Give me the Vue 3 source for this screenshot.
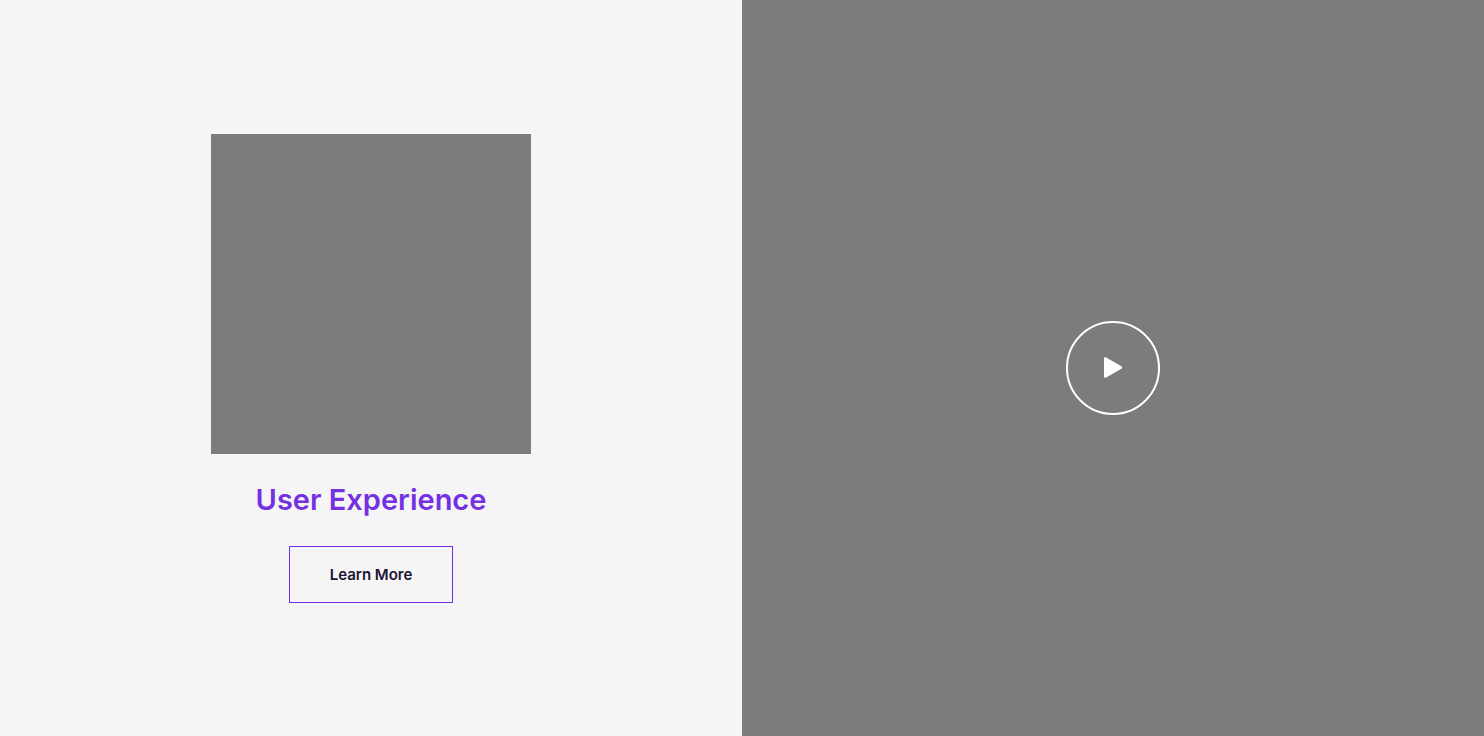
<script setup>
const title = 'User Experience'
</script>

<template>
  <main class="split">
    <section class="intro">
      <div class="media" role="img" :aria-label="title"></div>
      <h2 class="title">{{ title }}</h2>
      <a class="more" href="#">Learn More</a>
    </section>
    <section class="video">
      <button class="play" type="button" aria-label="Play video">
        <svg viewBox="0 0 20 22" width="20" height="22" aria-hidden="true">
          <path d="M1 1.600C1 .4 2 -.1 3.200.6L18.400 9.200C19.500 9.900 19.500 11.100 18.400 11.800L3.200 20.500C2 21.100 1 20.600 1 19.400Z" fill="#fff" />
        </svg>
      </button>
    </section>
  </main>
</template>

<style>
body {
  margin: 0;
}
</style>

<style scoped>
.split {
  display: grid;
  grid-template-columns: 1fr 1fr;
  min-height: 100vh;
  font-family: Inter, "Liberation Sans", sans-serif;
}
.intro {
  display: flex;
  flex-direction: column;
  align-items: center;
  justify-content: center;
  background: #f5f5f5;
}
.media {
  width: 320px;
  aspect-ratio: 1;
  background: #7b7c7e;
}
.title {
  margin: 28px 0;
  font-size: 29px;
  line-height: 36px;
  font-weight: 600;
  color: #7430e2;
}
.more {
  box-sizing: border-box;
  padding: 18px 40px;
  border: 1px solid #7430e2;
  font-size: 15px;
  line-height: 19px;
  font-weight: 600;
  color: #1b1435;
  text-decoration: none;
}
.video {
  display: flex;
  align-items: center;
  justify-content: center;
  background: #7b7c7e;
}
.play {
  display: flex;
  align-items: center;
  justify-content: center;
  width: 94px;
  height: 94px;
  padding: 0;
  border: 2px solid #fff;
  border-radius: 50%;
  background: transparent;
  cursor: pointer;
}
</style>
